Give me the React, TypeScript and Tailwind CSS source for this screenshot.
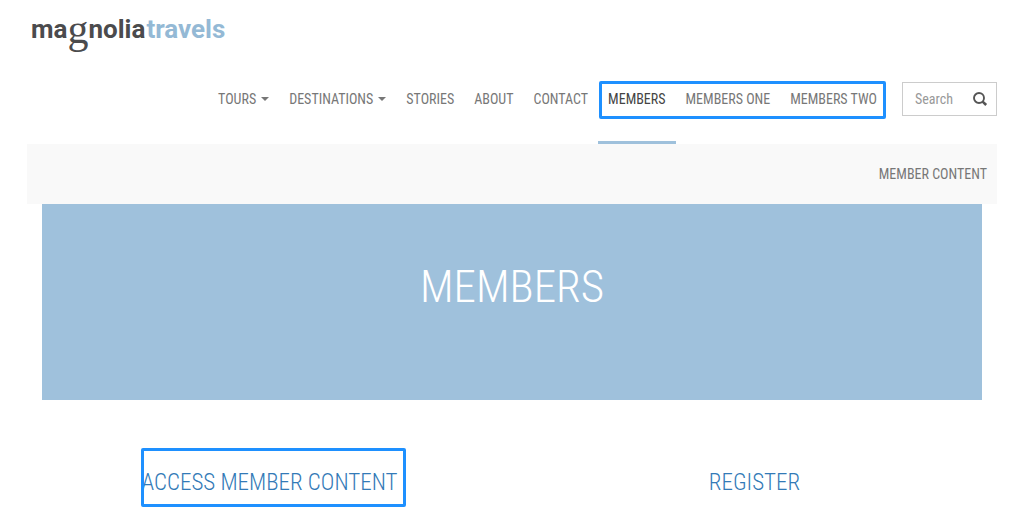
import React from "react";

type NavItem = { label: string; menu?: boolean; active?: boolean };

const mainItems: NavItem[] = [
  { label: "Tours", menu: true },
  { label: "Destinations", menu: true },
  { label: "Stories" },
  { label: "About" },
  { label: "Contact" },
];

const memberItems: NavItem[] = [
  { label: "Members", active: true },
  { label: "Members One" },
  { label: "Members Two" },
];

function NavLink({ label, menu, active }: NavItem) {
  return (
    <a
      href="#"
      aria-current={active ? "page" : undefined}
      className={
        active
          ? "flex h-[74px] items-start border-b-[3px] border-[#9fc1dc] px-[10px] pt-[19px] text-[#444]"
          : "flex h-[74px] items-start px-[10px] pt-[19px]"
      }
    >
      {label}
      {menu && (
        <span
          aria-hidden="true"
          className="mt-2 ml-[5px] border-x-4 border-t-4 border-x-transparent border-t-[#777]"
        />
      )}
    </a>
  );
}

function Logo() {
  return (
    <a
      href="#"
      aria-label="magnolia travels"
      className="flex h-[70px] items-start pt-3 pl-1 font-['Roboto',sans-serif] text-[26px] leading-[34px] font-bold text-[#4b4b4d]"
    >
      <span>ma</span>
      <span className="font-['Liberation_Serif',serif] text-[42px] font-normal">g</span>
      <span>nolia</span>
      <span className="ml-px text-[#94b9d5]">travels</span>
    </a>
  );
}

export default function App() {
  return (
    <div className="min-h-screen bg-white pr-[13px] pl-[27px] font-['Roboto_Condensed','Liberation_Sans_Narrow',sans-serif]">
      <header>
        <Logo />
        <div className="flex justify-end">
          <nav className="flex text-sm leading-5 text-[#777] uppercase">
            {mainItems.map((item) => (
              <NavLink key={item.label} {...item} />
            ))}
            <div className="relative flex">
              {memberItems.map((item) => (
                <NavLink key={item.label} {...item} />
              ))}
              <div className="pointer-events-none absolute inset-x-px top-[11px] h-[38px] rounded-xs border-[3px] border-[#1e90ff]" />
            </div>
          </nav>
          <form className="mt-3 ml-[15px] flex h-[34px] w-[95px] items-center border border-[#ccc] pr-2 pl-3">
            <input
              type="search"
              aria-label="Search"
              placeholder="Search"
              className="min-w-0 flex-1 text-sm outline-none placeholder:text-[#999]"
            />
            <button type="button" aria-label="Submit search">
              <svg viewBox="0 0 16 16" className="size-4" fill="none" stroke="#555">
                <circle cx="7" cy="7" r="5" strokeWidth="1.9" />
                <path d="M10.6 10.6 14.2 14" strokeWidth="2.6" />
              </svg>
            </button>
          </form>
        </div>
        <nav className="flex h-[60px] items-center justify-end bg-[#f9f9f9] px-[10px] text-sm text-[#777] uppercase">
          <a href="#">Member Content</a>
        </nav>
      </header>
      <main>
        <section className="mx-[15px] flex h-[196px] justify-center bg-[#9fc1dc] pt-[58px]">
          <h1 className="text-[45px] leading-[50px] font-light text-white uppercase">Members</h1>
        </section>
        <div className="grid grid-cols-2 pt-12 text-center text-[23px] leading-[26px] font-light text-[#337ab7] uppercase">
          <h2>
            <a href="#" className="relative inline-block pt-[22px] pb-[11px]">
              Access Member Content
              <span className="pointer-events-none absolute top-0 -right-2 bottom-0 left-0 rounded-xs border-[3px] border-[#1e90ff]" />
            </a>
          </h2>
          <h2>
            <a href="#" className="inline-block pt-[22px]">Register</a>
          </h2>
        </div>
      </main>
    </div>
  );
}
